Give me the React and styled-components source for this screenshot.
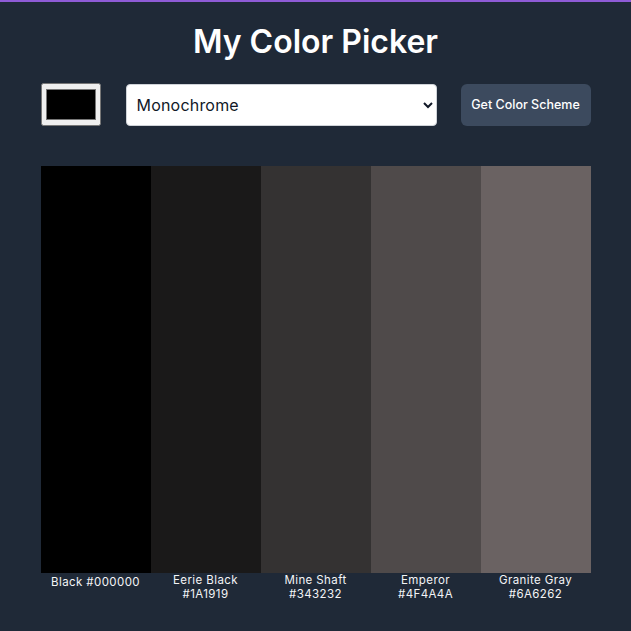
import { useState } from "react";
import styled, { createGlobalStyle } from "styled-components";

const GlobalStyle = createGlobalStyle`
  html, body {
    margin: 0;
    padding: 0;
    background-color: #1f2937;
  }
  body {
    font-family: "Inter", "Open Sans", sans-serif;
    color: #ffffff;
  }
`;

const Page = styled.div`
  min-height: 100vh;
  box-sizing: border-box;
  border-top: 2px solid #8e5bd6;
  background-color: #1f2937;
  display: flex;
  flex-direction: column;
  align-items: center;
`;

const Title = styled.h1`
  margin: 20px 0 0;
  font-size: 32px;
  line-height: 40px;
  font-weight: 600;
`;

const Controls = styled.div`
  width: 550px;
  margin-top: 21px;
  display: flex;
  align-items: center;
  gap: 25px;
`;

const ColorInput = styled.input`
  width: 60px;
  height: 43px;
  margin: 0;
  flex: none;
`;

const Select = styled.select`
  flex: 1;
  height: 42px;
  margin: 0;
  padding: 0 6px;
  border: 1px solid #cfd3d8;
  border-radius: 4px;
  background-color: #ffffff;
  color: #111827;
  font-family: inherit;
  font-size: 16px;
  letter-spacing: 0.2px;
`;

const Button = styled.button`
  flex: none;
  width: 130px;
  height: 42px;
  margin-left: -1px;
  border: none;
  border-radius: 6px;
  background-color: #3c4a5e;
  color: #ffffff;
  font-family: inherit;
  font-size: 12.5px;
  font-weight: 500;
  cursor: pointer;
`;

const Palette = styled.div`
  width: 550px;
  margin-top: 40px;
  display: grid;
  grid-template-columns: repeat(5, 1fr);
`;

const Swatch = styled.div`
  display: flex;
  flex-direction: column;
`;

const Strip = styled.div`
  height: 407px;
  background-color: ${(p) => p.$color};
`;

const Label = styled.div`
  padding: ${(p) => (p.$single ? "2px" : "0")} 4px 0;
  text-align: center;
  font-size: 11.5px;
  line-height: 14px;
  letter-spacing: 0.4px;
  color: #f3f4f6;
`;

const colors = [
  { name: "Black", hex: "#000000" },
  { name: "Eerie Black", hex: "#1A1919" },
  { name: "Mine Shaft", hex: "#343232" },
  { name: "Emperor", hex: "#4F4A4A" },
  { name: "Granite Gray", hex: "#6A6262" },
];

function App() {
  const [seed, setSeed] = useState("#000000");
  const [mode, setMode] = useState("monochrome");

  return (
    <Page>
      <GlobalStyle />
      <Title>My Color Picker</Title>
      <Controls>
        <ColorInput
          type="color"
          value={seed}
          onChange={(e) => setSeed(e.target.value)}
        />
        <Select value={mode} onChange={(e) => setMode(e.target.value)}>
          <option value="monochrome">Monochrome</option>
          <option value="monochrome-dark">Monochrome-dark</option>
          <option value="monochrome-light">Monochrome-light</option>
          <option value="analogic">Analogic</option>
          <option value="complement">Complement</option>
          <option value="analogic-complement">Analogic-complement</option>
          <option value="triad">Triad</option>
        </Select>
        <Button>Get Color Scheme</Button>
      </Controls>
      <Palette>
        {colors.map((c) => (
          <Swatch key={c.hex}>
            <Strip $color={c.hex} />
            <Label $single={c.name.length < 6}>
              {c.name} {c.hex}
            </Label>
          </Swatch>
        ))}
      </Palette>
    </Page>
  );
}

export default App;
